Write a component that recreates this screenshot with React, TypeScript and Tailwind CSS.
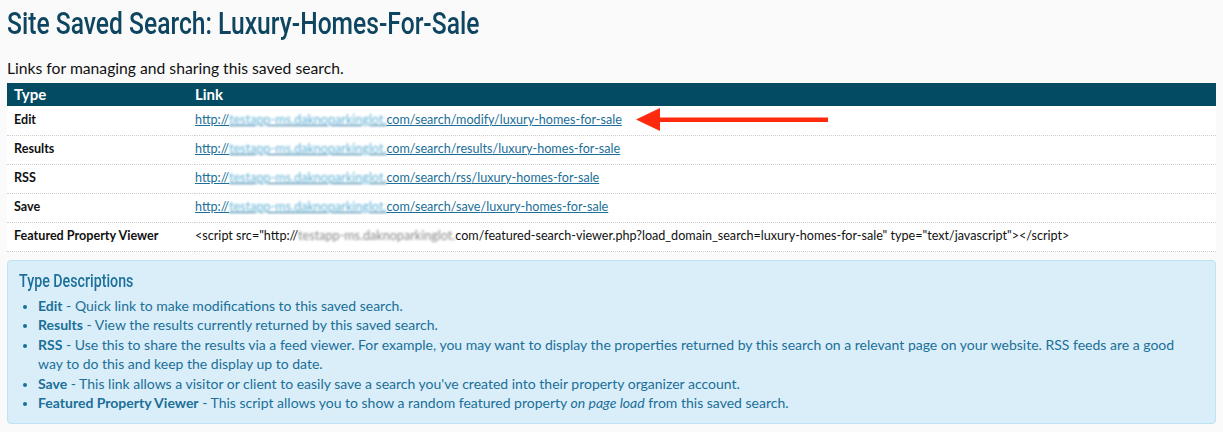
import React from 'react';

const body = "font-['Lato','Noto_Sans',sans-serif]";
const narrow = "font-['Roboto','Liberation_Sans',sans-serif]";

type Row = { type: string; path?: string };

const rows: Row[] = [
  { type: 'Edit', path: 'modify' },
  { type: 'Results', path: 'results' },
  { type: 'RSS', path: 'rss' },
  { type: 'Save', path: 'save' },
  { type: 'Featured Property Viewer' },
];

const Blurred: React.FC<{ className?: string }> = ({ className }) => (
  <span className={`blur-[1.3px] ${className ?? ''}`}>testapp-ms.daknoparkinglot.</span>
);

const Arrow = () => (
  <svg className="absolute left-[441px] top-[-5px]" width="196" height="25" viewBox="0 0 196 25">
    <polygon points="0,12.5 24,1 24,24" fill="#ff2a0d" />
    <rect x="22" y="10.5" width="170" height="4.5" fill="#ff2a0d" />
  </svg>
);

export default function App() {
  return (
    <div className={`min-h-[432px] bg-[#fafafa] px-[7px] pt-[3px] ${body}`}>
      <h1 className={`text-[32px] font-medium leading-[40px] text-[#0e4560] ${narrow}`}>
        <span className="inline-block origin-left scale-x-[0.77] whitespace-nowrap">
          Site Saved Search: Luxury-Homes-For-Sale
        </span>
      </h1>
      <p className="mt-[15px] text-[15.7px] leading-[20px] text-[#111]">
        Links for managing and sharing this saved search.
      </p>
      <table className="mt-[5px] w-full border-collapse bg-white text-[12.6px] text-[#111]">
        <thead>
          <tr className="bg-[#034b63] text-left text-[15px] font-bold text-white">
            <th className="w-[188px] px-[7px] py-0 leading-[23px]">Type</th>
            <th className="px-0 leading-[23px]">Link</th>
          </tr>
        </thead>
        <tbody>
          {rows.map((r) => (
            <tr key={r.type} className="border-b border-dotted border-[#cfcfcf]">
              <td className="h-[29px] px-[7px] font-bold">{r.type}</td>
              <td className="relative h-[29px]">
                {r.path ? (
                  <span className="relative">
                    <a className="text-[#1b6f98] underline" href="#">
                      http://<Blurred className="text-[#5fb0d6]" />com/search/{r.path}/luxury-homes-for-sale
                    </a>
                    {r.path === 'modify' && <Arrow />}
                  </span>
                ) : (
                  <span>
                    &lt;script src="http://<Blurred className="text-[#888]" />com/featured-search-viewer.php?load_domain_search=luxury-homes-for-sale" type="text/javascript"&gt;&lt;/script&gt;
                  </span>
                )}
              </td>
            </tr>
          ))}
        </tbody>
      </table>
      <div className="mt-[8px] rounded-[4px] border border-[#bfe3f3] bg-[#d9eef9] pb-[10px] pl-[11px] pr-[22px] pt-[8px] text-[#1b6f98]">
        <h2 className={`text-[19px] font-medium leading-[24px] text-[#1b6f98] ${narrow}`}>
          <span className="inline-block origin-left scale-x-[0.75] whitespace-nowrap">Type Descriptions</span>
        </h2>
        <ul className="mt-[3px] list-disc pl-[19px] text-[14px] leading-[19.5px] marker:text-[12px]">
          <li><b>Edit</b> - Quick link to make modifications to this saved search.</li>
          <li><b>Results</b> - View the results currently returned by this saved search.</li>
          <li>
            <b>RSS</b> - Use this to share the results via a feed viewer. For example, you may want to display the properties returned by this search on a relevant page on your website. RSS feeds are a good way to do this and keep the display up to date.
          </li>
          <li><b>Save</b> - This link allows a visitor or client to easily save a search you've created into their property organizer account.</li>
          <li><b>Featured Property Viewer</b> - This script allows you to show a random featured property <i>on page load</i> from this saved search.</li>
        </ul>
      </div>
    </div>
  );
}
